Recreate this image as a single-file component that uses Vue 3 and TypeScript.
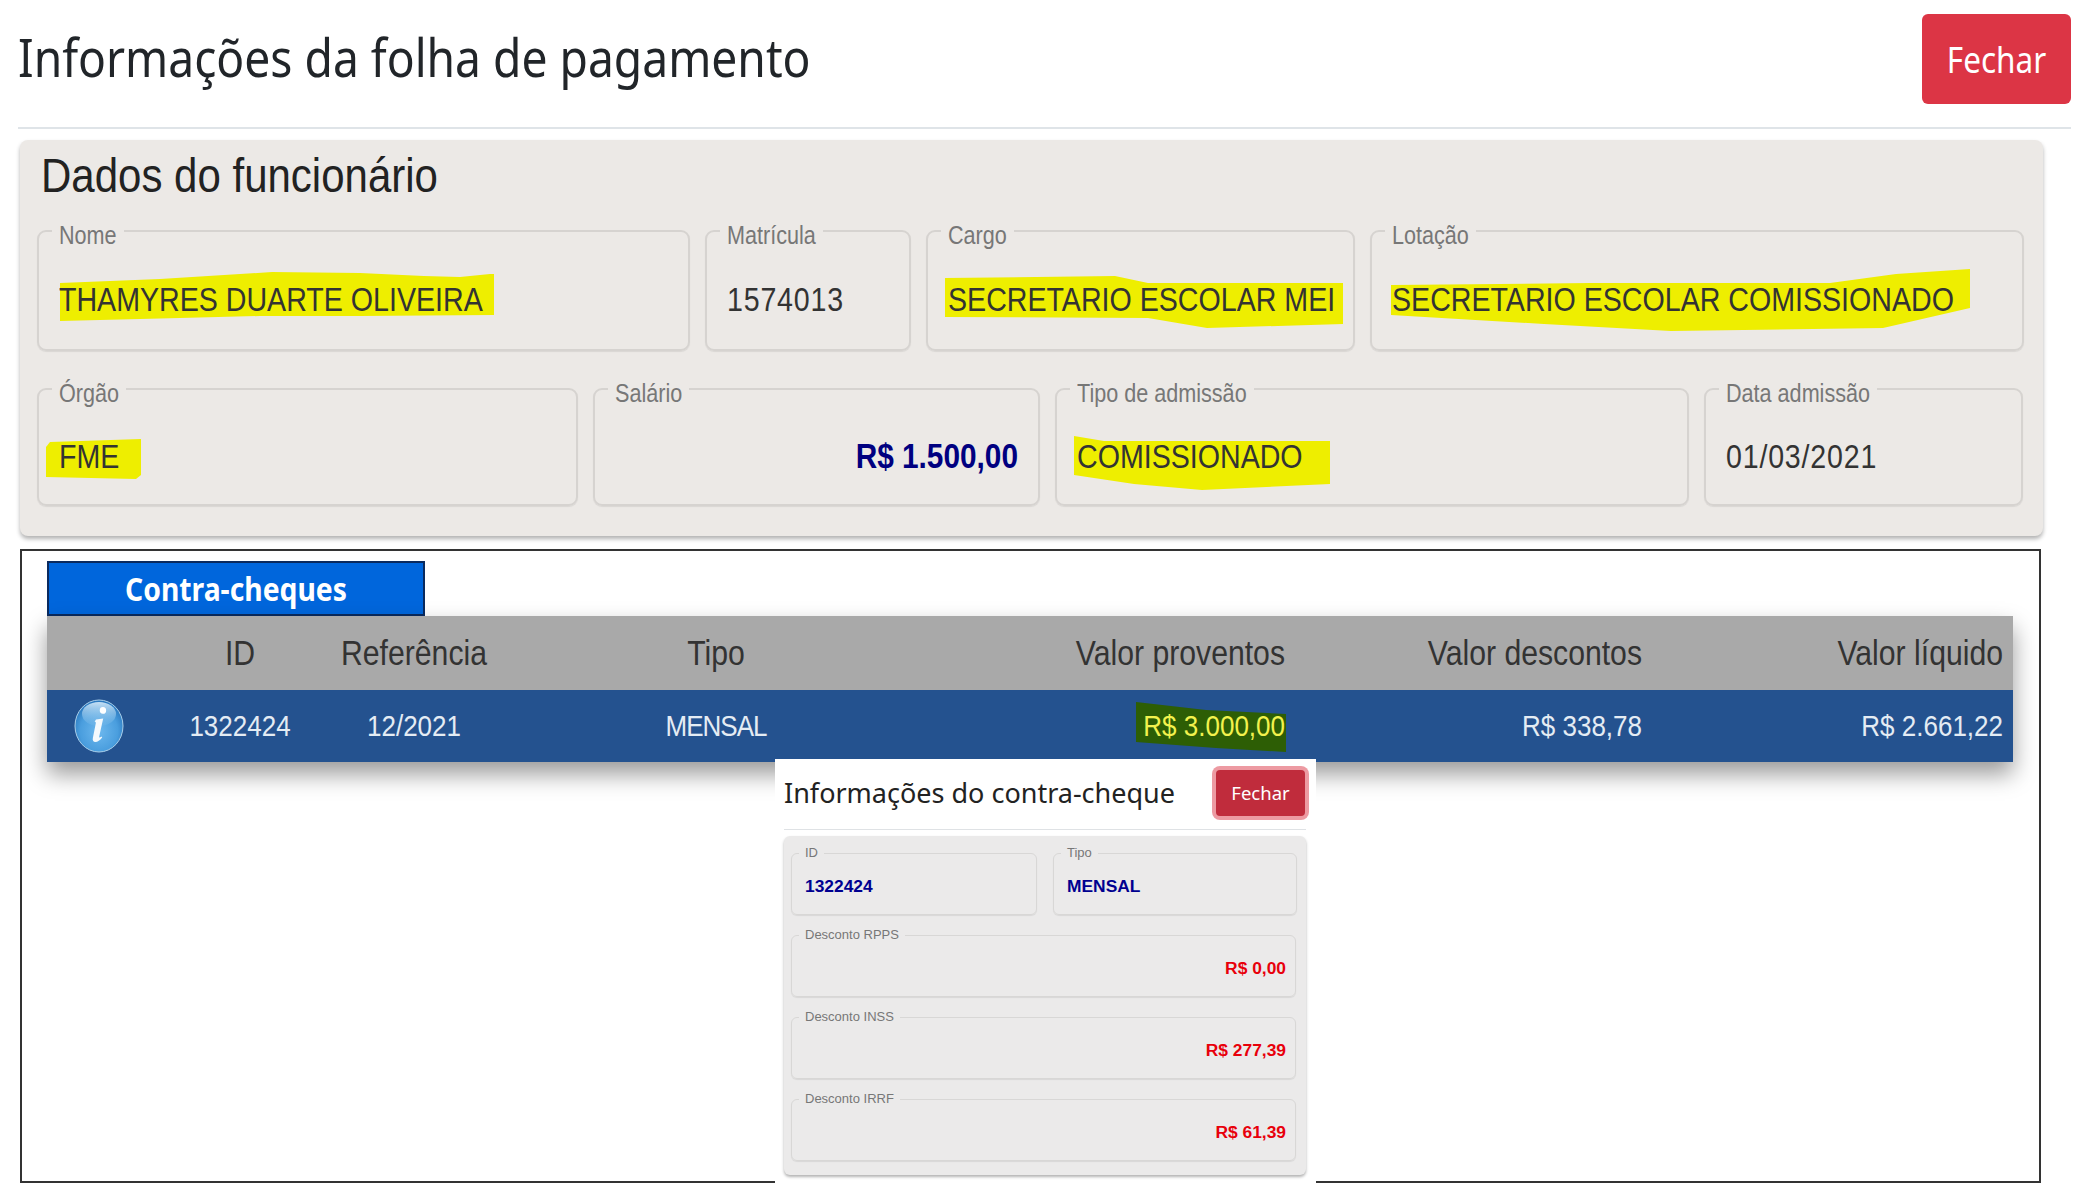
<script setup lang="ts">
interface Field {
  label: string
  value: string
  cls: string
  hl?: string
  right?: boolean
  digits?: boolean
}

const rowOne: Field[] = [
  { label: 'Nome', value: 'THAMYRES DUARTE OLIVEIRA', cls: 'f-nome', hl: 'hl-nome' },
  { label: 'Matrícula', value: '1574013', cls: 'f-mat', digits: true },
  { label: 'Cargo', value: 'SECRETARIO ESCOLAR MEI', cls: 'f-cargo', hl: 'hl-cargo' },
  { label: 'Lotação', value: 'SECRETARIO ESCOLAR COMISSIONADO', cls: 'f-lot', hl: 'hl-lot' },
]
const rowTwo: Field[] = [
  { label: 'Órgão', value: 'FME', cls: 'f-org', hl: 'hl-org' },
  { label: 'Salário', value: 'R$ 1.500,00', cls: 'f-sal', right: true },
  { label: 'Tipo de admissão', value: 'COMISSIONADO', cls: 'f-tipo', hl: 'hl-tipo' },
  { label: 'Data admissão', value: '01/03/2021', cls: 'f-data', digits: true },
]
const discounts = [
  { label: 'Desconto RPPS', value: 'R$ 0,00' },
  { label: 'Desconto INSS', value: 'R$ 277,39' },
  { label: 'Desconto IRRF', value: 'R$ 61,39' },
]
</script>

<template>
  <div class="page">
    <header class="top">
      <h1 class="title"><span class="tall">Informações da folha de pagamento</span></h1>
      <button class="close"><span class="tall">Fechar</span></button>
    </header>
    <div class="rule"></div>

    <section class="card">
      <h2 class="card-title"><span class="tall">Dados do funcionário</span></h2>
      <div class="fields first">
        <fieldset v-for="f in rowOne" :key="f.label" class="field" :class="f.cls">
          <legend><span class="tall">{{ f.label }}</span></legend>
          <div class="value" :class="{ digits: f.digits }">
            <i v-if="f.hl" class="hl" :class="f.hl"></i>
            <span class="tall">{{ f.value }}</span>
          </div>
        </fieldset>
      </div>
      <div class="fields second">
        <fieldset v-for="f in rowTwo" :key="f.label" class="field" :class="f.cls">
          <legend><span class="tall">{{ f.label }}</span></legend>
          <div class="value" :class="{ money: f.right, digits: f.digits }">
            <i v-if="f.hl" class="hl" :class="f.hl"></i>
            <span class="tall">{{ f.value }}</span>
          </div>
        </fieldset>
      </div>
    </section>

    <section class="box">
      <div class="tab"><span class="tall">Contra-cheques</span></div>
      <div class="table">
        <div class="tr head">
          <div></div>
          <div class="c"><span class="tall">ID</span></div>
          <div class="c"><span class="tall">Referência</span></div>
          <div class="c"><span class="tall">Tipo</span></div>
          <div class="r"><span class="tall">Valor proventos</span></div>
          <div class="r"><span class="tall">Valor descontos</span></div>
          <div class="r"><span class="tall">Valor líquido</span></div>
        </div>
        <div class="tr body">
          <div class="c icon-cell">
            <svg width="50" height="54" viewBox="0 0 50 54" aria-label="Informações">
              <defs>
                <radialGradient id="ball" cx="50%" cy="60%" r="65%">
                  <stop offset="0%" stop-color="#6db8ee" />
                  <stop offset="60%" stop-color="#4a9ede" />
                  <stop offset="100%" stop-color="#1f6bb4" />
                </radialGradient>
                <linearGradient id="gloss" x1="0" y1="0" x2="0" y2="1">
                  <stop offset="0%" stop-color="#d8ecfa" stop-opacity=".9" />
                  <stop offset="100%" stop-color="#8cc4ec" stop-opacity=".15" />
                </linearGradient>
              </defs>
              <ellipse cx="25" cy="27" rx="24" ry="26" fill="url(#ball)" stroke="#a9cfea" stroke-width="1" />
              <ellipse cx="25" cy="15" rx="17" ry="12" fill="url(#gloss)" />
              <path d="M29 8a3.2 3.4 0 1 1-.1 6.8 3.2 3.4 0 0 1 .1-6.8z" fill="#fff" />
              <path d="M22 20.5l7.2-1-4 18c-.3 1.4.5 1.5 2.3 0l.7 1c-2.4 3-4.5 4.4-6.8 4.4-2.2 0-3.1-1.5-2.5-4.2l2.9-14.4c.2-1.2-.2-1.5-1.2-1.6z" fill="#f4f9fd" />
            </svg>
          </div>
          <div class="c"><span class="tall">1322424</span></div>
          <div class="c"><span class="tall">12/2021</span></div>
          <div class="c"><span class="tall tight">MENSAL</span></div>
          <div class="r">
            <span class="earned"><i class="hl hl-green"></i><span class="tall">R$ 3.000,00</span></span>
          </div>
          <div class="r"><span class="tall">R$ 338,78</span></div>
          <div class="r"><span class="tall">R$ 2.661,22</span></div>
        </div>
      </div>
    </section>

    <aside class="modal">
      <div class="modal-top">
        <h3 class="modal-title">Informações do contra-cheque</h3>
        <button class="modal-close">Fechar</button>
      </div>
      <div class="modal-rule"></div>
      <div class="modal-card">
        <div class="mini-pair">
          <fieldset class="mini">
            <legend>ID</legend>
            <div class="mini-value navy">1322424</div>
          </fieldset>
          <fieldset class="mini">
            <legend>Tipo</legend>
            <div class="mini-value navy">MENSAL</div>
          </fieldset>
        </div>
        <fieldset v-for="d in discounts" :key="d.label" class="mini">
          <legend>{{ d.label }}</legend>
          <div class="mini-value red">{{ d.value }}</div>
        </fieldset>
      </div>
    </aside>
  </div>
</template>

<style scoped>
.page {
  position: relative;
  width: 2075px;
  height: 1186px;
  overflow: hidden;
  background: #fff;
  font-family: "Liberation Sans", Arial, sans-serif;
  color: #333;
}
.tall {
  display: inline-block;
  transform: scaleY(1.15);
}
.tight {
  letter-spacing: -1px;
}
.top {
  display: flex;
  justify-content: space-between;
  align-items: flex-start;
  padding: 14px 4px 0 18px;
  height: 114px;
  box-sizing: border-box;
}
.title {
  margin: 0;
  font: 400 46.2px/62px "Noto Sans", "Open Sans", sans-serif;
  color: #212529;
  padding-top: 12px;
}
.close {
  width: 149px;
  height: 90px;
  border: 0;
  border-radius: 6px;
  background: #dc3545;
  color: #fff;
  font: 400 31.5px "Noto Sans", "Open Sans", sans-serif;
  padding: 0 0 2px;
}
.rule {
  height: 2px;
  background: #dfe4e8;
  margin: 13px 4px 0 18px;
}
.card {
  width: 2023px;
  height: 396px;
  margin: 11px 0 0 20px;
  padding: 0 20px 0 17px;
  box-sizing: border-box;
  background: #ece9e6;
  border-radius: 8px;
  box-shadow: 0 3px 4px rgba(0, 0, 0, 0.3);
}
.card-title {
  margin: 0;
  height: 76px;
  padding-left: 4px;
  font: 400 42px/72px "Liberation Sans", Arial, sans-serif;
  color: #222;
}
.fields {
  display: grid;
  column-gap: 15px;
}
.first {
  grid-template-columns: 653px 206px 429px 654px;
  height: 135px;
}
.second {
  grid-template-columns: 541px 447px 634px 319px;
  height: 132px;
  margin-top: 23px;
}
.f-mat {
  margin-left: -1px;
}
.field {
  margin: 0;
  min-width: 0;
  box-sizing: border-box;
  border: 2px solid #d6d3d0;
  border-radius: 9px;
  padding: 0 20px 0 13px;
  box-shadow: 0 1px 1px rgba(0, 0, 0, 0.08);
}
.field legend {
  padding: 10px 7px 0;
  font-size: 21.6px;
  line-height: 20px;
  color: #777;
  white-space: nowrap;
}
.value {
  position: relative;
  isolation: isolate;
  margin-top: 36px;
  padding-left: 7px;
  font-size: 28.6px;
  line-height: 36px;
  white-space: nowrap;
  color: #333;
}
.second .value {
  margin-top: 35px;
}
.digits {
  letter-spacing: 0.8px;
}
.money {
  text-align: right;
  padding: 0;
  font-weight: 700;
  font-size: 29.8px;
  color: #000080;
}
.hl {
  position: absolute;
  z-index: -1;
  background: #eeee00;
  display: block;
}
.hl-nome {
  left: 8px;
  top: -10px;
  width: 434px;
  height: 49px;
  clip-path: polygon(0 11px, 100px 7px, 212px 0, 300px 1px, 364px 4px, 400px 5px, 430px 2px, 434px 2px, 434px 43px, 300px 44px, 200px 44px, 120px 46px, 0 49px);
}
.hl-cargo {
  left: 4px;
  top: -6px;
  width: 398px;
  height: 52px;
  clip-path: polygon(0 2px, 170px 0, 203px 7px, 398px 7px, 398px 48px, 262px 52px, 203px 42px, 0 41px);
}
.hl-lot {
  left: 6px;
  top: -13px;
  width: 579px;
  height: 62px;
  clip-path: polygon(0 16px, 200px 14px, 439px 14px, 505px 5px, 579px 0, 579px 39px, 492px 59px, 280px 62px, 153px 55px, 0 46px);
}
.hl-org {
  left: -6px;
  top: 0;
  width: 95px;
  height: 40px;
  clip-path: polygon(4px 3px, 95px 0, 95px 36px, 90px 40px, 0 38px, 0 8px);
}
.hl-tipo {
  left: 4px;
  top: -3px;
  width: 256px;
  height: 54px;
  clip-path: polygon(0 0, 30px 5px, 256px 5px, 256px 48px, 128px 54px, 60px 48px, 0 39px);
}
.box {
  width: 2021px;
  height: 634px;
  margin: 13px 0 0 20px;
  padding: 10px 0 0 25px;
  box-sizing: border-box;
  border: 2px solid #333;
}
.tab {
  width: 378px;
  height: 55px;
  box-sizing: border-box;
  background: #0066dc;
  border: 2px solid #0a2a5e;
  color: #fff;
  text-align: center;
  font: 700 28.3px/50px "Noto Sans", "Open Sans", sans-serif;
}
.table {
  width: 1966px;
  box-shadow: 0 12px 22px rgba(0, 0, 0, 0.4);
}
.tr {
  display: grid;
  grid-template-columns: 133px 120px 228px 376px 391px 357px 361px;
  align-items: center;
  white-space: nowrap;
}
.head {
  height: 74px;
  background: #a9a9a9;
  font-size: 30.2px;
  color: #333;
}
.body {
  height: 72px;
  background: #24528f;
  font-size: 26px;
  color: #e4ecf4;
}
.c {
  text-align: center;
}
.r {
  text-align: right;
  padding-right: 10px;
}
.icon-cell {
  display: flex;
  justify-content: center;
  padding-right: 30px;
}
.earned {
  position: relative;
  isolation: isolate;
  display: inline-block;
  line-height: 36px;
  color: #f2f24d;
}
.hl-green {
  right: -1px;
  top: -6px;
  width: 150px;
  height: 50px;
  background: #2d5e05;
  clip-path: polygon(0 0, 70px 8px, 150px 12px, 150px 50px, 80px 46px, 0 40px);
}
.modal {
  position: absolute;
  left: 775px;
  top: 759px;
  width: 541px;
  height: 427px;
  background: #fff;
  box-sizing: border-box;
  padding: 0 10px 0 9px;
}
.modal-top {
  display: flex;
  justify-content: space-between;
  align-items: center;
  height: 68px;
  padding-top: 2px;
  box-sizing: border-box;
}
.modal-title {
  margin: 0 0 3px;
  font: 400 27px/40px "Noto Sans", "Open Sans", sans-serif;
  color: #222;
  white-space: nowrap;
}
.modal-close {
  width: 89px;
  height: 46px;
  margin: 0 1px 3px 0;
  border: 0;
  border-radius: 4px;
  background: #c02c3c;
  color: #fff;
  font: 400 18.5px "Noto Sans", "Open Sans", sans-serif;
  box-shadow: 0 0 0 4px rgba(220, 53, 69, 0.5);
  padding: 0;
}
.modal-rule {
  height: 1px;
  background: #dfe2e5;
  margin-top: 2px;
}
.modal-card {
  margin-top: 6px;
  height: 339px;
  padding: 9px 10px 0 7px;
  box-sizing: border-box;
  background: #ebeaea;
  border-radius: 6px;
  box-shadow: 0 2px 3px rgba(0, 0, 0, 0.3);
  display: flex;
  flex-direction: column;
  gap: 12px;
}
.mini-pair {
  display: grid;
  grid-template-columns: 246px 244px;
  column-gap: 16px;
}
.mini {
  margin: 0;
  min-width: 0;
  height: 70px;
  box-sizing: border-box;
  border: 1.5px solid #d8d7d6;
  border-radius: 6px;
  padding: 0 9px 0 7px;
  box-shadow: 0 1px 1px rgba(0, 0, 0, 0.08);
}
.mini legend {
  padding: 0 6px;
  font-size: 13px;
  line-height: 16px;
  color: #777;
  white-space: nowrap;
}
.mini-value {
  margin-top: 14px;
  font-size: 17.4px;
  font-weight: 700;
  line-height: 22px;
}
.navy {
  padding-left: 6px;
  color: #000090;
}
.red {
  text-align: right;
  color: #e8000b;
}
</style>
